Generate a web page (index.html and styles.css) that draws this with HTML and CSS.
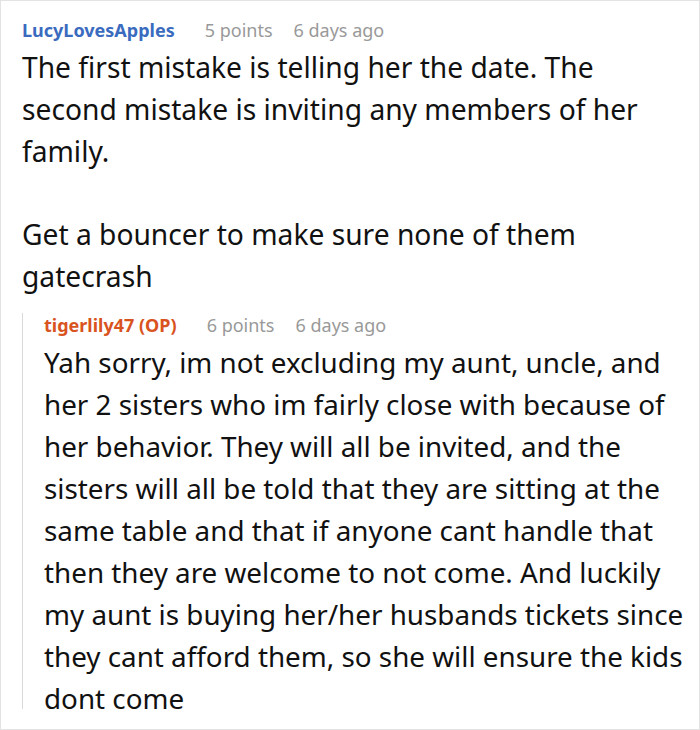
FILE: index.html
```html
<!DOCTYPE html>
<html>
<head>
<meta charset="utf-8">
<link rel="stylesheet" href="styles.css">
</head>
<body>
<div class="frame">
  <div class="comment">
    <div class="meta">
      <span class="author author-blue">LucyLovesApples</span>
      <span class="info">5 points</span>
      <span class="info">6 days ago</span>
    </div>
    <div class="body">The first mistake is telling her the date. The second mistake is inviting any members of her family.<br><br>Get a bouncer to make sure none of them gatecrash</div>
    <div class="reply">
      <div class="meta reply-meta">
        <span class="author author-orange">tigerlily47 (OP)</span>
        <span class="info">6 points</span>
        <span class="info">6 days ago</span>
      </div>
      <div class="reply-body">Yah sorry, im not excluding my aunt, uncle, and her 2 sisters who im fairly close with because of her behavior. They will all be invited, and the sisters will all be told that they are sitting at the same table and that if anyone cant handle that then they are welcome to not come. And luckily my aunt is buying her/her husbands tickets since they cant afford them, so she will ensure the kids dont come</div>
    </div>
  </div>
</div>
</body>
</html>
```
FILE: styles.css
```css
html, body {
  margin: 0;
  padding: 0;
  background: #ffffff;
}
.frame {
  box-sizing: border-box;
  width: 700px;
  height: 730px;
  border: 1px solid #e3e3e3;
  overflow: hidden;
  font-family: "Noto Sans", "Open Sans", sans-serif;
  color: #111;
}
.comment {
  padding: 17px 0 0 21px;
}
.meta {
  display: flex;
  align-items: baseline;
  gap: 21px;
  font-size: 18px;
  line-height: 24px;
  white-space: nowrap;
}
.meta .author {
  font-weight: 700;
  margin-right: 9px;
}
.author-blue { color: #3a6bbf; }
.author-orange { color: #d9531e; }
.info { color: #999999; }
.body {
  font-size: 28.2px;
  line-height: 41.8px;
  margin-top: 5px;
  width: 660px;
}
.reply {
  margin-top: 25px;
  border-left: 1px solid #d9d9d9;
  padding-left: 21px;
}
.reply-meta {
  margin-top: -10px;
}
.reply-body {
  font-size: 27.8px;
  line-height: 42px;
  margin-top: 4px;
  width: 646px;
  height: 368px;
}
```
